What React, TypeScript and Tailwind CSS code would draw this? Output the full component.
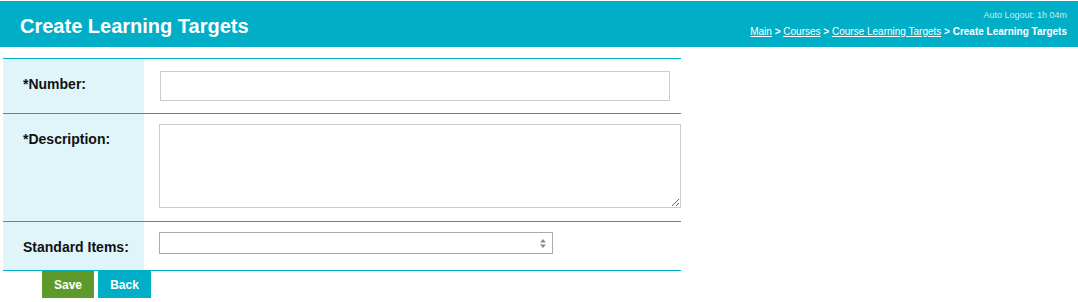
const labelCls = "w-[141px] bg-[#e0f5f9] pl-5 pt-[15px] text-[14px] font-bold text-[#111] align-top";

const App = () => {
  return (
    <div className="w-[1078px] h-[302px] bg-white font-['Liberation_Sans',Arial,sans-serif]">
      <div className="h-[1px]" />
      <div className="flex justify-between items-start h-[46px] bg-[#00aec7] pl-5 pr-[11px]">
        <h1 className="text-[20px] font-bold text-white pt-[15px] leading-none">Create Learning Targets</h1>
        <div className="flex flex-col items-end pt-[10px]">
          <span className="text-[9px] text-[#c6eef6] leading-none">Auto Logout: 1h 04m</span>
          <div className="text-[10px] text-white mt-[7px] leading-none">
            <a href="#" className="underline">Main</a>
            <b> &gt; </b>
            <a href="#" className="underline">Courses</a>
            <b> &gt; </b>
            <a href="#" className="underline">Course Learning Targets</a>
            <b> &gt; Create Learning Targets</b>
          </div>
        </div>
      </div>

      <div className="ml-[3px] mt-[11px] w-[678px] border-t border-[#00aec7]">
        <div className="flex h-[55px] border-b border-[#00aec7]">
          <div className={labelCls + " pt-[14px]"}>*Number:</div>
          <div className="flex-1 pl-4 pt-3">
            <input className="w-[510px] h-[30px] border border-[#cccccc] outline-none" />
          </div>
        </div>
        <div className="flex h-[108px] border-b border-[#00aec7]">
          <div className={labelCls}>*Description:</div>
          <div className="flex-1 pl-[15px] pt-[10px]">
            <textarea className="block w-[522px] h-[84px] border border-[#cccccc] outline-none" />
          </div>
        </div>
        <div className="flex h-[49px] border-b border-[#00aec7]">
          <div className={labelCls}>Standard Items:</div>
          <div className="flex-1 pl-[15px] pt-[10px]">
            <div className="relative w-[394px] h-[22px] border border-[#aaaaaa] bg-white">
              <svg className="absolute right-[6px] top-[6px]" width="6" height="9" viewBox="0 0 6 9">
                <path d="M3 0 L6 3.5 H0 Z" fill="#888" />
                <path d="M3 9 L6 5.5 H0 Z" fill="#888" />
              </svg>
            </div>
          </div>
        </div>
      </div>

      <div className="flex gap-1 ml-[42px]">
        <button className="w-[52px] h-[27px] bg-[#5e9a2a] text-white text-[12px] font-bold">Save</button>
        <button className="w-[53px] h-[27px] bg-[#00aec7] text-white text-[12px] font-bold">Back</button>
      </div>
    </div>
  );
};

export default App;
